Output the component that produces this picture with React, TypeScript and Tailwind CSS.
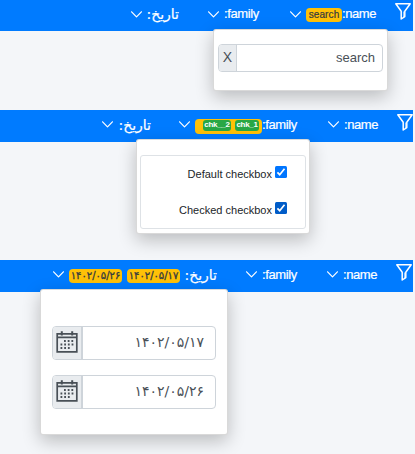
import type { ReactNode } from 'react';

const latin = "font-['Liberation_Sans',sans-serif]";
const persian = "font-['DejaVu_Sans',sans-serif]";

function Chevron({ className }: { className: string }) {
  return (
    <svg viewBox="0 0 11 7" className={`h-[7px] w-[11px] shrink-0 ${className}`} fill="none" stroke="white" strokeWidth="1.2" strokeLinecap="round" strokeLinejoin="round">
      <path d="M.6 .8 5.5 5.8 10.4 .8" />
    </svg>
  );
}

function Funnel({ className }: { className: string }) {
  return (
    <svg viewBox="0 0 16 17" className={`h-[17px] w-4 shrink-0 self-start ${className}`} fill="none" stroke="white" strokeWidth="1.5" strokeLinejoin="round">
      <path d="M.8 .8H15.2L9.8 8.3V13.6L6.2 16V8.3Z" />
      <path d="M8.6 8.5V14" strokeWidth="1.3" strokeOpacity=".6" />
    </svg>
  );
}

function Calendar() {
  return (
    <svg viewBox="0 0 22 22" className="size-[22px] shrink-0" fill="none" stroke="#495057" strokeWidth="1.7">
      <path d="M1.2 2.8H20.8V20.8H1.2ZM1.2 6.3H20.8" />
      <path d="M5.8 .3V4.5M16.2 .3V4.5" strokeWidth="2" />
      <path d="M8 10H18M4.5 13.5H18M4.5 17H14" strokeWidth="1.8" strokeDasharray="1.8 1.9" />
    </svg>
  );
}

function Label({ children, className }: { children: ReactNode; className: string }) {
  return <span className={`shrink-0 whitespace-nowrap text-[13px] leading-4 tracking-[-0.4px] text-white [-webkit-text-stroke:0.2px_white] ${latin} ${className}`}>{children}</span>;
}

function DateLabel({ className }: { className: string }) {
  return <span dir="rtl" className={`w-[33px] shrink-0 whitespace-nowrap text-[14px] leading-4 text-white [-webkit-text-stroke:0.2px_white] ${persian} ${className}`}>تاریخ:</span>;
}

function DateBadge({ children, className }: { children: string; className: string }) {
  return <span className={`flex h-[14px] w-[53px] shrink-0 items-center justify-center rounded bg-[#ffc107] pb-[2px] text-[10px] tracking-[-0.9px] text-[#343a40] [-webkit-text-stroke:0.3px_#343a40] ${persian} ${className}`}>{children}</span>;
}

function DateInput({ value }: { value: string }) {
  return (
    <div className="flex h-[34px] w-[164px] overflow-hidden rounded border border-[#ced4da]">
      <div className="flex w-[30px] items-center justify-center border-r-2 border-[#ced4da] bg-[#e9ecef] pb-[3px]">
        <Calendar />
      </div>
      <div className={`flex flex-1 items-center justify-end pb-0.5 pr-[11px] text-[14px] tracking-[-0.9px] text-[#495057] ${persian}`}>{value}</div>
    </div>
  );
}

function CheckRow({ label, color }: { label: string; color: string }) {
  return (
    <label className={`flex h-3 items-center justify-end gap-[3px] text-[11px] text-[#212529] ${latin}`}>
      <span className="pt-1">{label}</span>
      <svg viewBox="0 0 12 12" className="size-3">
        <rect width="12" height="12" rx="1.5" fill={color} />
        <path d="m2.4 6.3 2.3 2.4 4.8-6" fill="none" stroke="white" strokeWidth="1.7" />
      </svg>
    </label>
  );
}

const bar = 'flex w-[413px] items-center bg-[#007bff]';
const popup = 'absolute rounded-[3px] border border-black/15 bg-white shadow-[0_6px_18px_rgba(0,0,0,0.24)]';

export default function App() {
  return (
    <main className="flex h-[454px] w-[415px] flex-col overflow-hidden bg-[#f4f6f9]">
      <section className="relative h-[110px] shrink-0">
        <div className={`${bar} h-[31px] pb-[3px]`}>
          <Chevron className="ml-[131px]" />
          <DateLabel className="ml-[4px]" />
          <Chevron className="ml-[29px]" />
          <Label className="ml-[5px] w-[37px]">:family</Label>
          <Chevron className="ml-[29px]" />
          <span className={`ml-[5px] mt-0.5 flex h-[14px] w-9 shrink-0 items-center justify-center rounded bg-[#ffc107] pb-px text-[10px] tracking-[0.1px] text-[#343a40] [-webkit-text-stroke:0.2px_#343a40] ${latin}`}>search</span>
          <Label className="w-[35px]">:name</Label>
          <Funnel className="ml-[18px] mt-[3px]" />
        </div>
        <div className={`${popup} left-[213px] top-[29px] flex h-[62px] w-[175px] items-start pl-1 pt-[14px]`}>
          <div className="flex h-7 w-[165px] overflow-hidden rounded border border-[#ced4da]">
            <div className={`flex w-[18px] items-center justify-center border-r border-[#ced4da] bg-[#e9ecef] pb-px text-[14px] text-[#495057] ${latin}`}>X</div>
            <div className={`flex flex-1 items-center justify-end pr-[7px] text-[13px] text-[#495057] ${latin}`}>search</div>
          </div>
        </div>
      </section>
      <section className="relative h-[150px] shrink-0">
        <div className={`${bar} h-8 pb-[3px]`}>
          <Chevron className="ml-[102px]" />
          <DateLabel className="ml-[5px]" />
          <Chevron className="ml-[28px]" />
          <span className={`ml-[5px] mt-[3px] flex h-[15px] w-[67px] shrink-0 items-start gap-1 rounded bg-[#ffc107] pl-2 pt-px text-[8px] font-bold leading-[9px] text-white ${latin}`}>
            <span className="h-[11px] w-7 rounded-[3px] bg-[#28a745] text-center tracking-[-0.3px]">chk__2</span>
            <span className="h-[11px] w-6 rounded-[3px] bg-[#28a745] text-center tracking-[-0.3px]">chk_1</span>
          </span>
          <Label className="w-[37px]">:family</Label>
          <Chevron className="ml-[29px]" />
          <Label className="ml-[5px] w-[35px]">:name</Label>
          <Funnel className="ml-[18px] mt-[4px]" />
        </div>
        <div className={`${popup} left-[136px] top-[29px] h-[95px] w-[174px] pl-[3px] pt-[15px]`}>
          <div className="flex h-[74px] w-[166px] flex-col gap-6 rounded-[3px] border border-[#dee2e6] pr-[18px] pt-[10px]">
            <CheckRow label="Default checkbox" color="#0075ff" />
            <CheckRow label="Checked checkbox" color="#005cc8" />
          </div>
        </div>
      </section>
      <section className="relative h-[194px] shrink-0">
        <div className={`${bar} h-8 pb-[3px]`}>
          <Chevron className="ml-[53px]" />
          <DateBadge className="ml-[5px] mt-[3px]">۱۴۰۲/۰۵/۲۶</DateBadge>
          <DateBadge className="ml-[5px] mt-[3px]">۱۴۰۲/۰۵/۱۷</DateBadge>
          <DateLabel className="ml-[4px]" />
          <Chevron className="ml-[29px]" />
          <Label className="ml-[5px] w-[37px]">:family</Label>
          <Chevron className="ml-[28px]" />
          <Label className="ml-[5px] w-[35px]">:name</Label>
          <Funnel className="ml-[18px] mt-[4px]" />
        </div>
        <div className={`${popup} left-[40px] top-[29px] flex h-[146px] w-[188px] flex-col gap-[15px] pl-[11px] pt-[36px]`}>
          <DateInput value="۱۴۰۲/۰۵/۱۷" />
          <DateInput value="۱۴۰۲/۰۵/۲۶" />
        </div>
      </section>
    </main>
  );
}
